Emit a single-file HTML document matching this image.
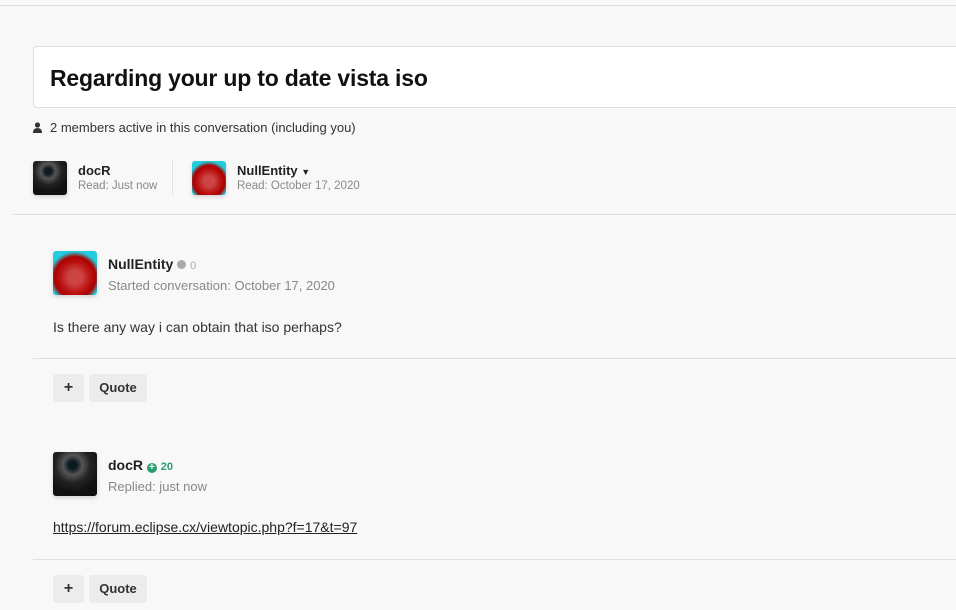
<!DOCTYPE html>
<html><head><meta charset="utf-8"><style>
*{margin:0;padding:0;box-sizing:border-box}
body{width:956px;height:610px;overflow:hidden;background:#f8f8f8;font-family:"Liberation Sans",sans-serif;color:#222;position:relative}
.abs{position:absolute}
.topline{left:0;top:5px;width:956px;height:1px;background:#ddd}
.title{left:33px;top:46px;width:940px;height:62px;background:#fff;border:1px solid #ddd;border-radius:4px}
.title h1{position:absolute;left:16px;top:18px;font-size:23px;font-weight:bold;color:#111;letter-spacing:-0.2px}
.av{border-radius:3px;box-shadow:0 2px 4px rgba(0,0,0,.15)}
.dark{background:radial-gradient(circle at 45% 30%,#0d1a22 10%,#555 25%,#222 45%,#111 70%)}
.red{background:radial-gradient(circle at 50% 60%,#c44 20%,#b11 45%,#a00 60%,#2cd 75%)}
.small{font-size:11.5px;color:#888}
.name{font-size:13px;font-weight:bold;color:#222}
.hr{height:1px;background:#e0e0e0}
.btn{background:#ececec;border-radius:3px;font-size:13px;font-weight:bold;color:#333;text-align:center;line-height:28px;height:28px}
</style></head><body>
<div class="abs topline"></div>
<div class="abs title"><h1>Regarding your up to date vista iso</h1></div>
<svg class="abs" style="left:33px;top:122px" width="9" height="11" viewBox="0 0 9 11"><circle cx="4.5" cy="3" r="2.6" fill="#333"/><path d="M0 11 Q0 6 4.5 6 Q9 6 9 11Z" fill="#333"/></svg>
<div class="abs" style="left:50px;top:120px;font-size:13px;color:#333">2 members active in this conversation (including you)</div>

<div class="abs av dark" style="left:33px;top:161px;width:34px;height:34px"></div>
<div class="abs name" style="left:78px;top:163px">docR</div>
<div class="abs small" style="left:78px;top:180px">Read: Just now</div>
<div class="abs" style="left:172px;top:161px;width:1px;height:34px;background:#e0e0e0"></div>
<div class="abs av red" style="left:192px;top:161px;width:34px;height:34px"></div>
<div class="abs name" style="left:237px;top:163px">NullEntity <span style="font-size:9px">▼</span></div>
<div class="abs small" style="left:237px;top:180px">Read: October 17, 2020</div>
<div class="abs hr" style="left:13px;top:214px;width:943px"></div>

<div class="abs av red" style="left:53px;top:251px;width:44px;height:44px"></div>
<div class="abs name" style="left:108px;top:256px;font-size:14px">NullEntity <span style="display:inline-block;width:9px;height:9px;border-radius:50%;background:#aaa;vertical-align:0"></span> <span style="font-size:11px;color:#aaa;font-weight:normal">0</span></div>
<div class="abs" style="left:108px;top:278px;font-size:13px;color:#888">Started conversation: October 17, 2020</div>
<div class="abs" style="left:53px;top:319px;font-size:14px;color:#333">Is there any way i can obtain that iso perhaps?</div>
<div class="abs hr" style="left:33px;top:358px;width:923px"></div>
<div class="abs btn" style="left:53px;top:374px;width:31px;font-size:16px">+</div>
<div class="abs btn" style="left:89px;top:374px;width:58px">Quote</div>

<div class="abs av dark" style="left:53px;top:452px;width:44px;height:44px"></div>
<div class="abs name" style="left:108px;top:457px;font-size:14px">docR <span style="display:inline-block;width:10px;height:10px;border-radius:50%;background:#2a9d6f;color:#fff;font-size:10px;line-height:10px;text-align:center;vertical-align:0">+</span> <span style="font-size:11px;color:#2a9d6f">20</span></div>
<div class="abs" style="left:108px;top:479px;font-size:13px;color:#888">Replied: just now</div>
<div class="abs" style="left:53px;top:519px;font-size:14px;color:#222;text-decoration:underline">https://forum.eclipse.cx/viewtopic.php?f=17&amp;t=97</div>
<div class="abs hr" style="left:33px;top:559px;width:923px"></div>
<div class="abs btn" style="left:53px;top:575px;width:31px;font-size:16px">+</div>
<div class="abs btn" style="left:89px;top:575px;width:58px">Quote</div>
</body></html>
